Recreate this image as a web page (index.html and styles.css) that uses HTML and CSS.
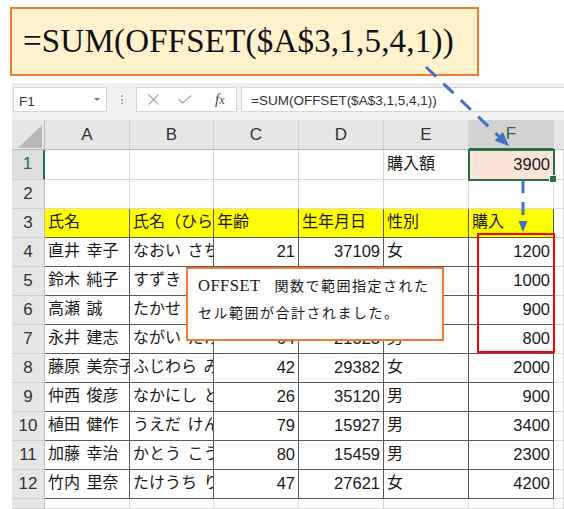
FILE: index.html
```html
<!DOCTYPE html>
<html lang="ja">
<head>
<meta charset="utf-8">
<title>OFFSET SUM</title>
<link rel="stylesheet" href="styles.css">
</head>
<body>
<div class="page">
  <div class="formula-note">=SUM(OFFSET($A$3,1,5,4,1))</div>
  <div class="excel">
    <div class="toolbar">
      <div class="namebox"><span>F1</span><span class="caret"></span></div>
      <div class="grip"><i></i><i></i><i></i></div>
      <div class="fxbox">
        <span class="ic"><svg width="11" height="11" viewBox="0 0 11 11"><path d="M0.5 0.5L10.5 10.5M10.5 0.5L0.5 10.5" stroke="#a8a8a8" stroke-width="1.2" fill="none"/></svg></span>
        <span class="ic"><svg width="14" height="9" viewBox="0 0 14 9"><path d="M0.6 4.2L4.6 8L13.4 0.6" stroke="#a8a8a8" stroke-width="1.3" fill="none"/></svg></span>
        <span class="ic fx"><i>f</i><i class="sub">x</i></span>
      </div>
      <div class="fbar">=SUM(OFFSET($A$3,1,5,4,1))</div>
    </div>
    <div class="sheet">
      <div class="ch corner"></div><div class="ch">A</div><div class="ch">B</div><div class="ch">C</div><div class="ch">D</div><div class="ch">E</div><div class="ch on">F</div><div class="ch last"></div>

      <div class="rh on">1</div><div class="c"></div><div class="c"></div><div class="c"></div><div class="c"></div><div class="c">購入額</div><div class="c n sel">3900</div><div class="c"></div>

      <div class="rh">2</div><div class="c"></div><div class="c"></div><div class="c"></div><div class="c"></div><div class="c"></div><div class="c"></div><div class="c"></div>

      <div class="rh">3</div><div class="c t y">氏名</div><div class="c t y">氏名（ひらがな）</div><div class="c t y">年齢</div><div class="c t y">生年月日</div><div class="c t y">性別</div><div class="c t y">購入</div><div class="c"></div>

      <div class="rh">4</div><div class="c t sp">直井 幸子</div><div class="c t sp">なおい さちこ</div><div class="c t n">21</div><div class="c t n">37109</div><div class="c t">女</div><div class="c t n">1200</div><div class="c"></div>

      <div class="rh">5</div><div class="c t sp">鈴木 純子</div><div class="c t sp">すずき じゅんこ</div><div class="c t n">35</div><div class="c t n">32156</div><div class="c t">女</div><div class="c t n">1000</div><div class="c"></div>

      <div class="rh">6</div><div class="c t sp">高瀬 誠</div><div class="c t sp">たかせ まこと</div><div class="c t n">52</div><div class="c t n">25384</div><div class="c t">男</div><div class="c t n">900</div><div class="c"></div>

      <div class="rh">7</div><div class="c t sp">永井 建志</div><div class="c t sp">ながい たけし</div><div class="c t n">64</div><div class="c t n">21323</div><div class="c t">男</div><div class="c t n">800</div><div class="c"></div>

      <div class="rh">8</div><div class="c t sp">藤原 美奈子</div><div class="c t sp">ふじわら みなこ</div><div class="c t n">42</div><div class="c t n">29382</div><div class="c t">女</div><div class="c t n">2000</div><div class="c"></div>

      <div class="rh">9</div><div class="c t sp">仲西 俊彦</div><div class="c t sp">なかにし としひこ</div><div class="c t n">26</div><div class="c t n">35120</div><div class="c t">男</div><div class="c t n">900</div><div class="c"></div>

      <div class="rh">10</div><div class="c t sp">植田 健作</div><div class="c t sp">うえだ けんさく</div><div class="c t n">79</div><div class="c t n">15927</div><div class="c t">男</div><div class="c t n">3400</div><div class="c"></div>

      <div class="rh">11</div><div class="c t sp">加藤 幸治</div><div class="c t sp">かとう こうじ</div><div class="c t n">80</div><div class="c t n">15459</div><div class="c t">男</div><div class="c t n">2300</div><div class="c"></div>

      <div class="rh">12</div><div class="c t sp">竹内 里奈</div><div class="c t sp">たけうち りな</div><div class="c t n">47</div><div class="c t n">27621</div><div class="c t">女</div><div class="c t n">4200</div><div class="c"></div>

      <div class="rh"></div><div class="c"></div><div class="c"></div><div class="c"></div><div class="c"></div><div class="c"></div><div class="c"></div><div class="c"></div>
    </div>
  </div>

  <div class="callout">
    <div class="line1"><span class="lat">OFFSET</span> 関数で範囲指定された</div>
    <div>セル範囲が合計されました。</div>
  </div>

  <div class="redbox"></div>

  <svg class="arrows" width="564" height="509" viewBox="0 0 564 509">
    <line x1="426" y1="67" x2="499" y2="136.5" stroke="#4472C4" stroke-width="3" stroke-dasharray="14 10"/>
    <polygon points="509,146 494.7,140.8 502.9,132" fill="#4472C4"/>
    <line x1="523" y1="180" x2="523" y2="222" stroke="#4472C4" stroke-width="3" stroke-dasharray="13 9"/>
    <polygon points="518.5,221 527.5,221 523,232" fill="#4472C4"/>
  </svg>
</div>
</body>
</html>
```
FILE: styles.css
```css
* { box-sizing: border-box; }

body {
  margin: 0;
  background: #ffffff;
  font-family: "Liberation Sans", "Noto Sans CJK JP", sans-serif;
}

.page {
  position: relative;
  width: 564px;
  height: 509px;
  overflow: hidden;
}

.formula-note {
  margin: 7px 0 0 10px;
  width: 469px;
  height: 69px;
  border: 2px solid #ED7D31;
  background: #FFF2CC;
  font-family: "Liberation Serif", serif;
  font-size: 33px;
  letter-spacing: 0.2px;
  color: #111111;
  display: flex;
  align-items: center;
  padding-left: 11px;
  white-space: nowrap;
}

.excel {
  margin: 7px 0 0 12px;
}

.toolbar {
  height: 37px;
  background: #f0f0f0;
  display: flex;
  align-items: flex-start;
  padding: 4px 0 0 1px;
}

.namebox {
  width: 94px;
  height: 25px;
  background: #ffffff;
  border: 1px solid #d6d6d6;
  display: flex;
  align-items: center;
  justify-content: space-between;
  padding: 3px 6px 0 5px;
  font-size: 13.5px;
  color: #333333;
}

.caret {
  width: 0;
  height: 0;
  border-left: 3px solid transparent;
  border-right: 3px solid transparent;
  border-top: 3px solid #777777;
  margin-bottom: 4px;
}

.grip {
  width: 29px;
  height: 25px;
  display: flex;
  flex-direction: column;
  align-items: center;
  justify-content: center;
  gap: 1.5px;
}

.grip i {
  width: 2px;
  height: 2px;
  background: #b4b4b4;
}

.fxbox {
  width: 101px;
  height: 25px;
  background: #ffffff;
  border: 1px solid #d6d6d6;
  display: flex;
}

.ic {
  flex: 1;
  display: flex;
  align-items: center;
  justify-content: center;
}

.fx {
  font-family: "Liberation Serif", serif;
  font-size: 15px;
  color: #444444;
  padding-left: 2px;
}

.fx .sub {
  font-size: 12px;
  position: relative;
  top: 1px;
}

.fbar {
  flex: 1;
  margin-left: 4px;
  height: 25px;
  background: #ffffff;
  border: 1px solid #d6d6d6;
  border-right: none;
  font-size: 13.5px;
  color: #333333;
  padding: 1px 0 0 9px;
  display: flex;
  align-items: center;
  white-space: nowrap;
}

.sheet {
  display: grid;
  grid-template-columns: 33px 85px 84px 85px 85px 85px 85px 10px;
  grid-template-rows: 30px 30px repeat(11, 29px) 10px;
}

.ch {
  background: #e6e6e6;
  color: #333333;
  font-size: 17px;
  display: flex;
  align-items: center;
  justify-content: center;
  border-right: 1px solid #d0d0d0;
  border-bottom: 1px solid #bdbdbd;
}

.ch.last { border-right: none; }

.ch.on {
  background: #d2d2d2;
  color: #217346;
  border-bottom: 2px solid #217346;
}

.corner {
  position: relative;
  border-right-color: #bdbdbd;
}

.corner::after {
  content: "";
  position: absolute;
  right: 2px;
  bottom: 1px;
  width: 24px;
  height: 23px;
  background: #b9b9b9;
  clip-path: polygon(100% 0, 100% 100%, 0 100%);
}

.rh {
  background: #e6e6e6;
  color: #333333;
  font-size: 17px;
  display: flex;
  align-items: center;
  justify-content: center;
  border-right: 1px solid #bdbdbd;
  border-bottom: 1px solid #d0d0d0;
  padding-bottom: 1px;
}

.rh.on {
  background: #dedede;
  color: #217346;
  border-right: 2px solid #217346;
}

.c {
  background: #ffffff;
  border-right: 1px solid #dadada;
  border-bottom: 1px solid #dadada;
  display: flex;
  align-items: center;
  padding: 0 3px 2px 3px;
  overflow: hidden;
  white-space: nowrap;
  font-size: 16px;
  line-height: 20px;
  color: #1a1a1a;
}

.t {
  border-right-color: #5a5a5a;
  border-bottom-color: #5a5a5a;
}

.y { background: #ffff00; }

.n {
  justify-content: flex-end;
  font-size: 16.5px;
  padding-right: 3px;
}

.sp { word-spacing: 2px; }

.sel {
  position: relative;
  overflow: visible;
  background: #FCE4D6;
}

.sel::after {
  content: "";
  position: absolute;
  left: -1px;
  top: -1px;
  right: -2px;
  bottom: -2px;
  border: 2px solid #217346;
}

.sel::before {
  content: "";
  position: absolute;
  right: -4px;
  bottom: -4px;
  width: 6px;
  height: 6px;
  background: #217346;
  border: 1px solid #ffffff;
  z-index: 2;
}

.callout {
  position: absolute;
  left: 186px;
  top: 267px;
  width: 258px;
  height: 74px;
  border: 2px solid #ED7D31;
  background: #ffffff;
  padding: 3px 0 0 10px;
  font-family: "Liberation Serif", "Noto Sans CJK JP", serif;
  font-size: 14px;
  letter-spacing: 1.5px;
  line-height: 27px;
  color: #1a1a1a;
  white-space: nowrap;
}

.callout .line1 { word-spacing: 9px; }

.callout .lat {
  font-size: 16.5px;
  letter-spacing: 0.5px;
}

.redbox {
  position: absolute;
  left: 477px;
  top: 233px;
  width: 78px;
  height: 120px;
  border: 2px solid #ff0000;
}

.arrows {
  position: absolute;
  left: 0;
  top: 0;
  pointer-events: none;
}
```
